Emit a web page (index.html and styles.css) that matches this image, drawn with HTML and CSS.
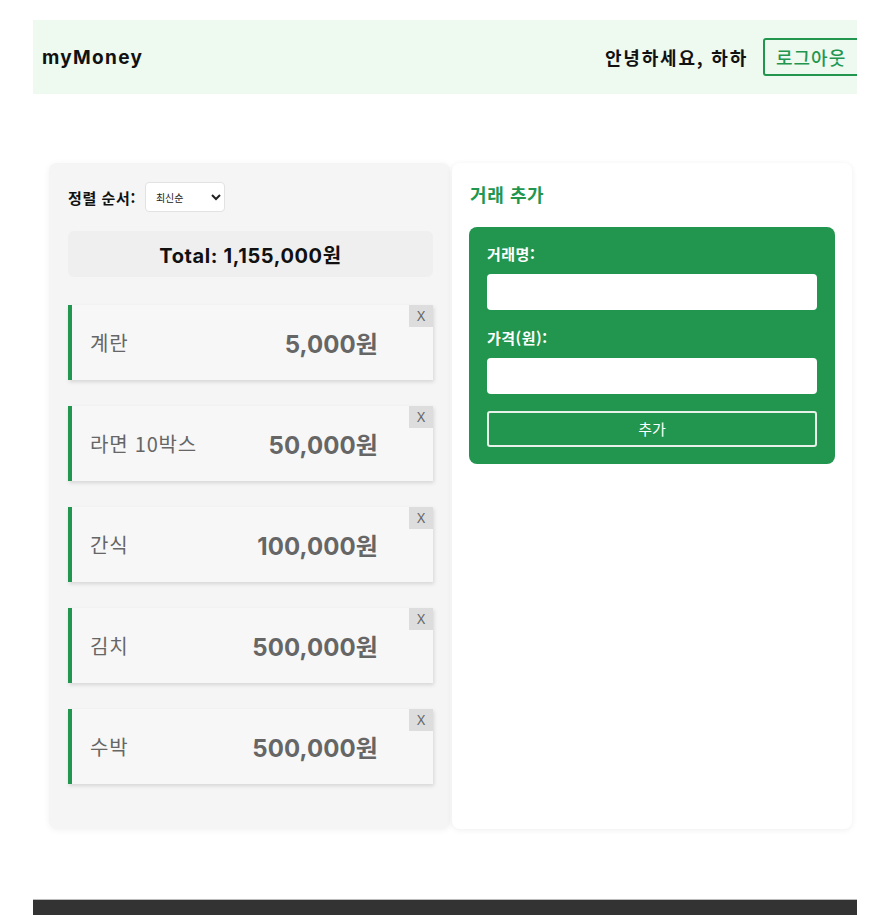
FILE: index.html
```html
<!DOCTYPE html>
<html lang="ko">
<head>
<meta charset="utf-8">
<title>myMoney</title>
<link rel="stylesheet" href="styles.css">
</head>
<body>
<div class="page">
  <header class="header">
    <div class="logo">myMoney</div>
    <div class="user">
      <span class="hello">안녕하세요, 하하</span>
      <button class="logout">로그아웃</button>
    </div>
  </header>

  <main class="main">
    <section class="list-panel">
      <div class="sort">
        <label class="sort-label">정렬 순서:</label>
        <select class="sort-select">
          <option>최신순</option>
        </select>
      </div>
      <div class="total">Total: 1,155,000원</div>
      <ul class="items">
        <li class="item"><span class="name">계란</span><span class="price">5,000원</span><button class="del">X</button></li>
        <li class="item"><span class="name">라면 10박스</span><span class="price">50,000원</span><button class="del">X</button></li>
        <li class="item"><span class="name">간식</span><span class="price">100,000원</span><button class="del">X</button></li>
        <li class="item"><span class="name">김치</span><span class="price">500,000원</span><button class="del">X</button></li>
        <li class="item"><span class="name">수박</span><span class="price">500,000원</span><button class="del">X</button></li>
      </ul>
    </section>

    <section class="add-panel">
      <h2 class="add-title">거래 추가</h2>
      <form class="add-form">
        <label class="field-label">거래명:</label>
        <input class="field-input" type="text">
        <label class="field-label second">가격(원):</label>
        <input class="field-input" type="text">
        <button class="add-btn" type="button">추가</button>
      </form>
    </section>
  </main>

  <footer class="footer"></footer>
</div>
</body>
</html>
```

FILE: styles.css
```css
* { box-sizing: border-box; }

body {
  margin: 0;
  background: #ffffff;
  font-family: "Noto Sans CJK KR", "Noto Sans", sans-serif;
  color: #111;
}

.page {
  margin: 20px 15px 0 33px;
}

.header {
  height: 74px;
  background: #eef9ef;
  display: flex;
  align-items: center;
  justify-content: space-between;
  padding-left: 9px;
  overflow: hidden;
}

.logo {
  font-family: "Inter", "Noto Sans", sans-serif;
  font-weight: 700;
  font-size: 19px;
  letter-spacing: 1.3px;
  color: #111;
}

.user {
  display: flex;
  align-items: center;
  gap: 15px;
  margin-right: -6px;
}

.hello {
  font-size: 18px;
  font-weight: 700;
  letter-spacing: 1.8px;
  color: #111;
}

.logout {
  height: 38px;
  padding: 0 0 0 11px;
  border: 2px solid #22964f;
  border-radius: 3px;
  background: transparent;
  color: #22964f;
  font-family: "Noto Sans CJK KR", sans-serif;
  font-size: 18px;
  font-weight: 500;
  letter-spacing: 1px;
  width: 100px;
  text-align: left;
}

.main {
  display: flex;
  align-items: stretch;
  gap: 2px;
  padding: 69px 5px 0 16px;
}

.list-panel {
  width: 401px;
  background: #f5f5f5;
  border-radius: 8px;
  box-shadow: 0 1px 6px rgba(0,0,0,0.06);
  padding: 19px 17px 45px 19px;
}

.sort {
  display: flex;
  align-items: center;
  gap: 9px;
  height: 30px;
}

.sort-label {
  font-size: 15px;
  font-weight: 700;
  letter-spacing: 0.6px;
  color: #111;
}

.sort-select {
  width: 80px;
  height: 30px;
  border: 1px solid #e2e2e2;
  border-radius: 4px;
  background: #fff;
  font-family: "Noto Sans CJK KR", sans-serif;
  font-size: 10px;
  padding: 0 6px;
  color: #222;
}

.total {
  margin-top: 19px;
  height: 46px;
  background: #efefef;
  border-radius: 6px;
  display: flex;
  align-items: center;
  justify-content: center;
  font-family: "Inter", "Noto Sans CJK KR", sans-serif;
  font-weight: 700;
  font-size: 20px;
  letter-spacing: 0.6px;
  color: #111;
}

.items {
  list-style: none;
  margin: 28px 0 0;
  padding: 0;
  display: flex;
  flex-direction: column;
  gap: 26px;
}

.item {
  position: relative;
  height: 75px;
  background: #f7f7f7;
  border-left: 4px solid #22964f;
  box-shadow: 1px 2px 4px rgba(0,0,0,0.13);
  display: flex;
  align-items: center;
  justify-content: space-between;
  padding: 0 55px 0 18px;
}

.name {
  font-size: 20px;
  color: #666;
  font-weight: 400;
  letter-spacing: 0.8px;
}

.price {
  font-family: "Inter", "Noto Sans CJK KR", sans-serif;
  font-size: 24px;
  font-weight: 700;
  color: #666;
  letter-spacing: 0.1px;
}

.del {
  position: absolute;
  top: 0;
  right: 0;
  width: 24px;
  height: 22px;
  border: none;
  background: #dddddd;
  color: #666;
  font-family: "Noto Sans", sans-serif;
  font-size: 14px;
  padding: 0;
  line-height: 22px;
}

.add-panel {
  width: 400px;
  background: #fff;
  border-radius: 8px;
  box-shadow: 0 1px 6px rgba(0,0,0,0.07);
  padding: 17px 17px 20px 17px;
}

.add-title {
  margin: 0 0 0 1px;
  font-size: 18px;
  font-weight: 700;
  letter-spacing: 0.6px;
  color: #22964f;
  line-height: 28px;
}

.add-form {
  margin-top: 19px;
  background: #22964f;
  border-radius: 8px;
  padding: 16px 18px 17px;
  display: flex;
  flex-direction: column;
}

.field-label {
  font-size: 15px;
  font-weight: 700;
  letter-spacing: 0.5px;
  color: #fff;
  line-height: 22px;
  margin-bottom: 9px;
}

.field-label.second {
  margin-top: 17px;
}

.field-input {
  height: 36px;
  border: none;
  border-radius: 4px;
  background: #fff;
}

.add-btn {
  margin-top: 17px;
  height: 36px;
  background: transparent;
  border: 2px solid #e8f2ea;
  border-radius: 3px;
  color: #fff;
  font-family: "Noto Sans CJK KR", sans-serif;
  font-size: 15px;
  line-height: 1;
  padding-bottom: 3px;
}

.footer {
  margin-top: 70px;
  height: 17px;
  background: #333;
  border-top: 1px solid #bbb;
}
```
